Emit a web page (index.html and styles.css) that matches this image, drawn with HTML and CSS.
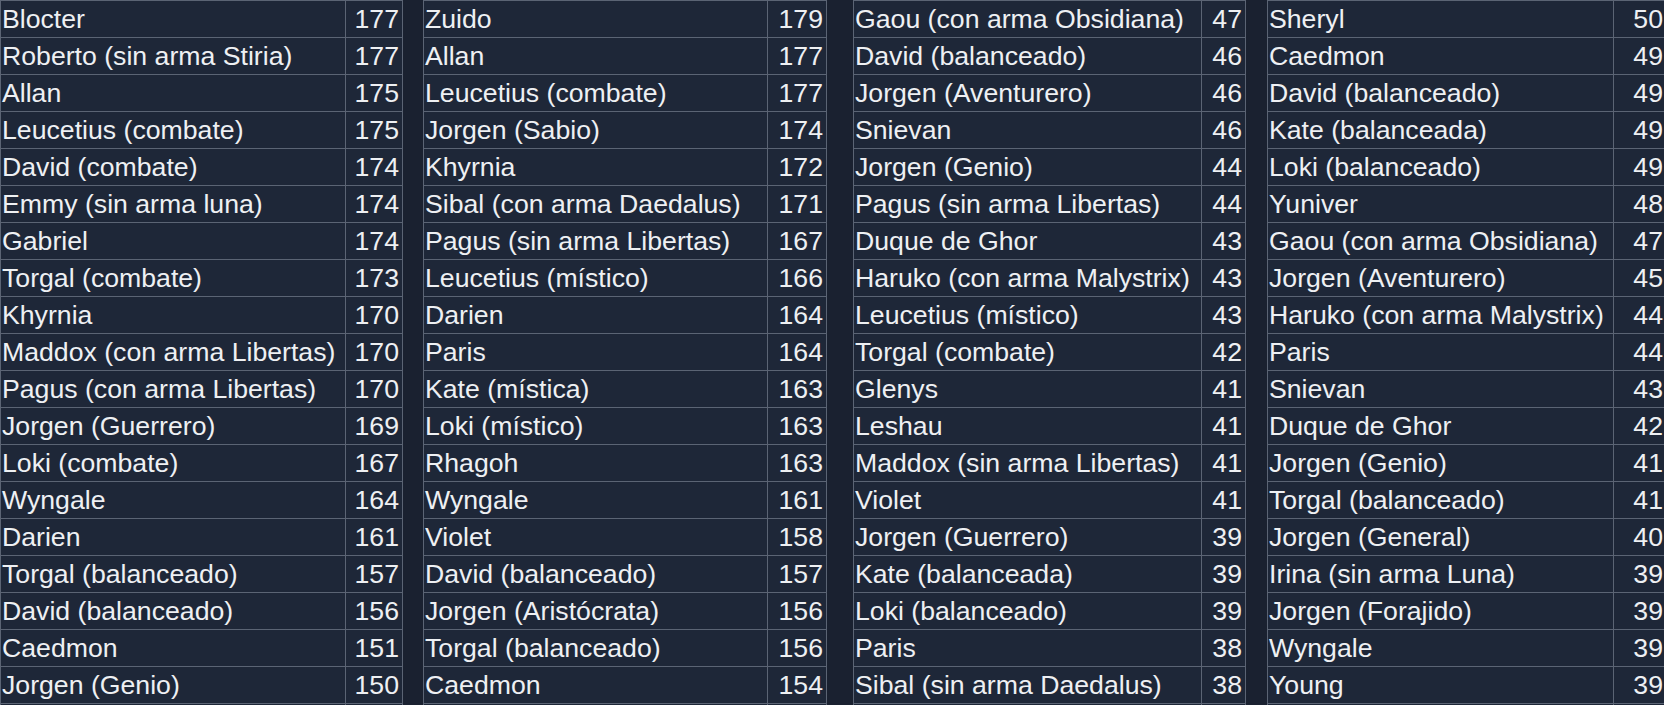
FILE: index.html
```html
<!DOCTYPE html>
<html lang="es">
<head>
<meta charset="utf-8">
<title>Tablas</title>
<link rel="stylesheet" href="styles.css">
</head>
<body>
<div class="board">
  <div class="col">
    <table class="tbl t1">
      <colgroup><col><col class="ncol"></colgroup>
      <tbody>
        <tr><td>Blocter</td><td class="num">177</td></tr>
        <tr><td>Roberto (sin arma Stiria)</td><td class="num">177</td></tr>
        <tr><td>Allan</td><td class="num">175</td></tr>
        <tr><td>Leucetius (combate)</td><td class="num">175</td></tr>
        <tr><td>David (combate)</td><td class="num">174</td></tr>
        <tr><td>Emmy (sin arma luna)</td><td class="num">174</td></tr>
        <tr><td>Gabriel</td><td class="num">174</td></tr>
        <tr><td>Torgal (combate)</td><td class="num">173</td></tr>
        <tr><td>Khyrnia</td><td class="num">170</td></tr>
        <tr><td>Maddox (con arma Libertas)</td><td class="num">170</td></tr>
        <tr><td>Pagus (con arma Libertas)</td><td class="num">170</td></tr>
        <tr><td>Jorgen (Guerrero)</td><td class="num">169</td></tr>
        <tr><td>Loki (combate)</td><td class="num">167</td></tr>
        <tr><td>Wyngale</td><td class="num">164</td></tr>
        <tr><td>Darien</td><td class="num">161</td></tr>
        <tr><td>Torgal (balanceado)</td><td class="num">157</td></tr>
        <tr><td>David (balanceado)</td><td class="num">156</td></tr>
        <tr><td>Caedmon</td><td class="num">151</td></tr>
        <tr><td>Jorgen (Genio)</td><td class="num">150</td></tr>
        <tr><td>&nbsp;</td><td class="num">&nbsp;</td></tr>
      </tbody>
    </table>
  </div>
  <div class="col">
    <table class="tbl t2">
      <colgroup><col><col class="ncol"></colgroup>
      <tbody>
        <tr><td>Zuido</td><td class="num">179</td></tr>
        <tr><td>Allan</td><td class="num">177</td></tr>
        <tr><td>Leucetius (combate)</td><td class="num">177</td></tr>
        <tr><td>Jorgen (Sabio)</td><td class="num">174</td></tr>
        <tr><td>Khyrnia</td><td class="num">172</td></tr>
        <tr><td>Sibal (con arma Daedalus)</td><td class="num">171</td></tr>
        <tr><td>Pagus (sin arma Libertas)</td><td class="num">167</td></tr>
        <tr><td>Leucetius (místico)</td><td class="num">166</td></tr>
        <tr><td>Darien</td><td class="num">164</td></tr>
        <tr><td>Paris</td><td class="num">164</td></tr>
        <tr><td>Kate (mística)</td><td class="num">163</td></tr>
        <tr><td>Loki (místico)</td><td class="num">163</td></tr>
        <tr><td>Rhagoh</td><td class="num">163</td></tr>
        <tr><td>Wyngale</td><td class="num">161</td></tr>
        <tr><td>Violet</td><td class="num">158</td></tr>
        <tr><td>David (balanceado)</td><td class="num">157</td></tr>
        <tr><td>Jorgen (Aristócrata)</td><td class="num">156</td></tr>
        <tr><td>Torgal (balanceado)</td><td class="num">156</td></tr>
        <tr><td>Caedmon</td><td class="num">154</td></tr>
        <tr><td>&nbsp;</td><td class="num">&nbsp;</td></tr>
      </tbody>
    </table>
  </div>
  <div class="col">
    <table class="tbl t3">
      <colgroup><col><col class="ncol"></colgroup>
      <tbody>
        <tr><td>Gaou (con arma Obsidiana)</td><td class="num">47</td></tr>
        <tr><td>David (balanceado)</td><td class="num">46</td></tr>
        <tr><td>Jorgen (Aventurero)</td><td class="num">46</td></tr>
        <tr><td>Snievan</td><td class="num">46</td></tr>
        <tr><td>Jorgen (Genio)</td><td class="num">44</td></tr>
        <tr><td>Pagus (sin arma Libertas)</td><td class="num">44</td></tr>
        <tr><td>Duque de Ghor</td><td class="num">43</td></tr>
        <tr><td>Haruko (con arma Malystrix)</td><td class="num">43</td></tr>
        <tr><td>Leucetius (místico)</td><td class="num">43</td></tr>
        <tr><td>Torgal (combate)</td><td class="num">42</td></tr>
        <tr><td>Glenys</td><td class="num">41</td></tr>
        <tr><td>Leshau</td><td class="num">41</td></tr>
        <tr><td>Maddox (sin arma Libertas)</td><td class="num">41</td></tr>
        <tr><td>Violet</td><td class="num">41</td></tr>
        <tr><td>Jorgen (Guerrero)</td><td class="num">39</td></tr>
        <tr><td>Kate (balanceada)</td><td class="num">39</td></tr>
        <tr><td>Loki (balanceado)</td><td class="num">39</td></tr>
        <tr><td>Paris</td><td class="num">38</td></tr>
        <tr><td>Sibal (sin arma Daedalus)</td><td class="num">38</td></tr>
        <tr><td>&nbsp;</td><td class="num">&nbsp;</td></tr>
      </tbody>
    </table>
  </div>
  <div class="col">
    <table class="tbl t4">
      <colgroup><col><col class="ncol"></colgroup>
      <tbody>
        <tr><td>Sheryl</td><td class="num">50</td></tr>
        <tr><td>Caedmon</td><td class="num">49</td></tr>
        <tr><td>David (balanceado)</td><td class="num">49</td></tr>
        <tr><td>Kate (balanceada)</td><td class="num">49</td></tr>
        <tr><td>Loki (balanceado)</td><td class="num">49</td></tr>
        <tr><td>Yuniver</td><td class="num">48</td></tr>
        <tr><td>Gaou (con arma Obsidiana)</td><td class="num">47</td></tr>
        <tr><td>Jorgen (Aventurero)</td><td class="num">45</td></tr>
        <tr><td>Haruko (con arma Malystrix)</td><td class="num">44</td></tr>
        <tr><td>Paris</td><td class="num">44</td></tr>
        <tr><td>Snievan</td><td class="num">43</td></tr>
        <tr><td>Duque de Ghor</td><td class="num">42</td></tr>
        <tr><td>Jorgen (Genio)</td><td class="num">41</td></tr>
        <tr><td>Torgal (balanceado)</td><td class="num">41</td></tr>
        <tr><td>Jorgen (General)</td><td class="num">40</td></tr>
        <tr><td>Irina (sin arma Luna)</td><td class="num">39</td></tr>
        <tr><td>Jorgen (Forajido)</td><td class="num">39</td></tr>
        <tr><td>Wyngale</td><td class="num">39</td></tr>
        <tr><td>Young</td><td class="num">39</td></tr>
        <tr><td>&nbsp;</td><td class="num">&nbsp;</td></tr>
      </tbody>
    </table>
  </div>
</div>
</body>
</html>
```
FILE: styles.css
```css
html, body {
  margin: 0;
  padding: 0;
  background: #1a2130;
  overflow: hidden;
}

.board {
  display: grid;
  grid-template-columns: 423px 430px 414px 1fr;
  font-family: "Liberation Sans", Arial, sans-serif;
  font-size: 26.67px;
  color: #eef0f3;
}

.col {
  min-width: 0;
}

.tbl {
  table-layout: fixed;
  border-collapse: separate;
  border-spacing: 0;
  border-top: 1px solid #5b6474;
  border-left: 1px solid #5b6474;
  background: #1e2738;
}

.tbl td {
  height: 36px;
  line-height: 36px;
  padding: 0 1px 0 1px;
  border-right: 1px solid #5b6474;
  border-bottom: 1px solid #5b6474;
  white-space: nowrap;
  overflow: hidden;
}

.tbl td.num {
  text-align: right;
  padding: 0 3px 0 0;
}

.t1 { width: 403px; }
.t1 .ncol { width: 57px; }

.t2 { width: 404px; }
.t2 .ncol { width: 59px; }

.t3 { width: 393px; }
.t3 .ncol { width: 44px; }

.t4 { width: 400px; }
.t4 .ncol { width: 53px; }
```
